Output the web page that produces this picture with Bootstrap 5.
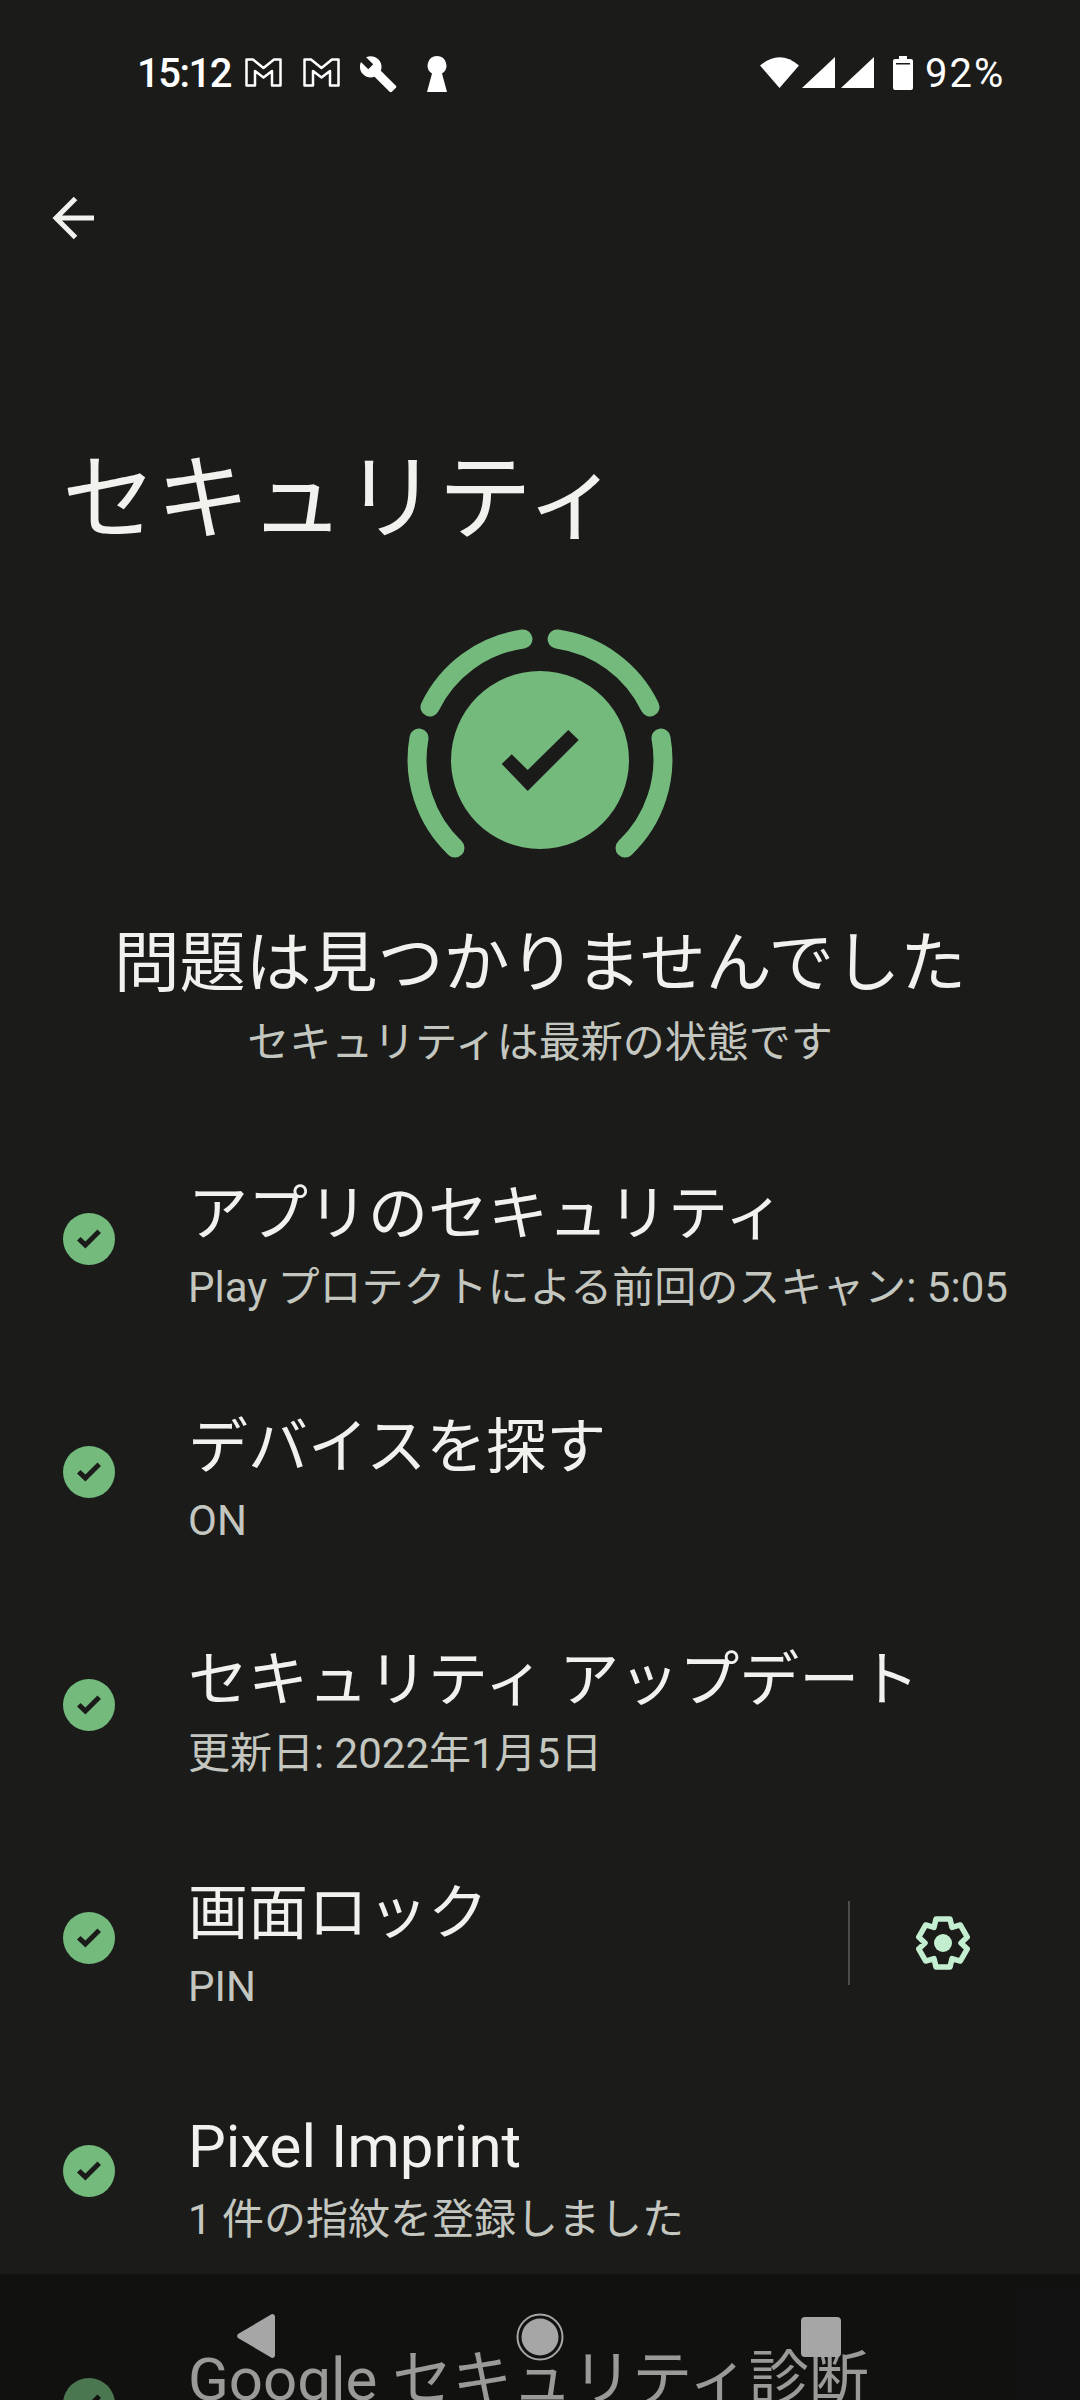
<!DOCTYPE html>
<html lang="ja">
<head>
    <meta charset="UTF-8">
    <meta name="viewport" content="width=device-width, initial-scale=1.0">
    <title>セキュリティ</title>
    <link href="https://cdn.jsdelivr.net/npm/bootstrap@5.3.3/dist/css/bootstrap.min.css" rel="stylesheet">
    <style>
        html, body { height: 2400px; overflow: hidden; }
        body { background: #1b1c1a; color: #f1f2ed; font-family: Roboto, "Noto Sans CJK JP", sans-serif; }
        .phone { height: 2400px; overflow: hidden; position: relative; }

        .statusbar { height: 146px; padding: 56px 75px 0 137px; align-items: flex-start; color: #fff; font-size: 40px; line-height: 36px; }
        .statusbar svg { display: block; fill: #fff; }
        .clock { width: 90px; letter-spacing: -1.500px; white-space: nowrap; font-weight: 500; }
        .percent { width: 80px; letter-spacing: 2px; white-space: nowrap; margin-left: 12px; }
        .back-row { height: 144px; padding: 50px 0 0 52px; }

        .page-title { font-size: 94px; font-weight: 400; line-height: 120px; margin: 150px 0 0 62px; }

        .shield { margin-top: 60px; }
        .shield svg { display: block; margin: 0 auto; }
        .summary-title { font-size: 66px; line-height: 90px; margin-top: 59px; font-weight: 400; }
        .summary-sub { font-size: 42px; line-height: 60px; margin-top: 4px; color: #c4c7c0; font-weight: 400; }

        .item-list { margin-top: 55px; }
        .sec-item { height: 233px; padding: 45px 0 0 63px; }
        .sec-check { width: 52px; height: 52px; margin-top: 40px; flex-shrink: 0; }
        .sec-text { margin-left: 73px; }
        .sec-title { font-size: 60px; line-height: 84px; font-weight: 400; white-space: nowrap; }
        .sec-sub { font-size: 42px; line-height: 56px; margin-top: 3px; color: #c4c7c0; font-weight: 400; white-space: nowrap; }
        .sec-side { width: 2px; height: 84px; background: #4d4e4c; margin: 29px 66px 0 0; }
        .sec-gear { margin: 44px 110px 0 0; }

        .nav-overlay { position: absolute; left: 0; right: 0; bottom: 0; height: 126px; background: rgba(0, 0, 0, .36); }
        .nav-overlay svg { position: absolute; fill: #a6a6a6; }
    </style>
</head>
<body>
    <div class="phone">
        <!-- status bar -->
        <div class="statusbar d-flex justify-content-between">
            <div class="d-flex align-items-start">
                <span class="clock">15:12</span>
                <svg width="37" height="29" viewBox="0 0 37 29" style="margin:2px 0 0 18px"><path d="M1.5 1.5H8L18.5 10 29 1.5h6.5v26H27V13l-8.5 6.500L10 13v14.500H1.500z" fill="none" stroke="#fff" stroke-width="2.500" stroke-linejoin="round"/></svg>
                <svg width="37" height="29" viewBox="0 0 37 29" style="margin:2px 0 0 21px"><path d="M1.5 1.5H8L18.5 10 29 1.5h6.5v26H27V13l-8.5 6.500L10 13v14.500H1.500z" fill="none" stroke="#fff" stroke-width="2.500" stroke-linejoin="round"/></svg>
                <svg width="38" height="38" viewBox="1 1 23 23" style="margin-left:20px"><path d="M22.7 19l-9.100-9.100c.9-2.300.4-5-1.500-6.900-2-2-5-2.400-7.400-1.300L9 6 6 9 1.600 4.700C.4 7.100.9 10.100 2.900 12.100c1.900 1.900 4.600 2.400 6.900 1.500l9.100 9.100c.4.4 1 .4 1.400 0l2.300-2.300c.5-.4.5-1.100.1-1.400z"/></svg>
                <svg width="20" height="36" viewBox="0 0 20 36" style="margin-left:29px"><path d="M10 0a9.500 9.500 0 0 1 5 17.500L20 36H0L5 17.500A9.500 9.500 0 0 1 10 0z"/></svg>
            </div>
            <div class="d-flex align-items-start">
                <svg width="39" height="31" viewBox="0 0 39 31" style="margin-top:1px"><path d="M0 8.500Q19.500-8 39 8.500L19.500 31z"/></svg>
                <svg width="33" height="31" viewBox="0 0 33 31" style="margin:1px 0 0 3px"><path d="M0 31L33 0v31z"/></svg>
                <svg width="33" height="31" viewBox="0 0 33 31" style="margin:1px 0 0 6px"><path d="M0 31L33 0v31z"/></svg>
                <svg width="20" height="34" viewBox="0 0 20 34" style="margin-left:19px"><path d="M6 0h8v3h4a2 2 0 0 1 2 2v27a2 2 0 0 1-2 2H2a2 2 0 0 1-2-2V5a2 2 0 0 1 2-2h4z"/><rect x="3" y="7" width="14" height="1.500" fill="#1b1c1a"/></svg>
                <span class="percent">92%</span>
            </div>
        </div>

        <!-- back arrow -->
        <div class="back-row">
            <svg width="44" height="44" viewBox="0 0 44 44" class="d-block"><path d="M3 22H42M23.500 2.500L4 22l19.500 19.500" fill="none" stroke="#f1f2ed" stroke-width="5"/></svg>
        </div>

        <h1 class="page-title">セキュリティ</h1>

        <!-- status summary -->
        <div class="shield">
            <svg width="280" height="240" viewBox="400 620 280 240">
                <g fill="none" stroke="#74ba7d" stroke-width="19" stroke-linecap="round">
                    <path d="M523 639A122 122 0 0 0 430 707"/>
                    <path d="M557 639A122 122 0 0 1 650 707"/>
                    <path d="M419 738A122 122 0 0 0 455 848"/>
                    <path d="M661 738A122 122 0 0 1 625 848"/>
                </g>
                <circle cx="540" cy="760" r="89" fill="#74ba7d"/>
                <polygon points="501.700,764 511.700,754.300 527.700,770 568.300,730 578.700,740 527.700,791" fill="#1b1c1a"/>
            </svg>
        </div>
        <div class="summary-title text-center">問題は見つかりませんでした</div>
        <div class="summary-sub text-center">セキュリティは最新の状態です</div>

        <!-- items -->
        <div class="item-list">
            <div class="sec-item d-flex">
                <svg class="sec-check" viewBox="-26 -26 52 52"><circle r="26" fill="#74ba7d"/><polygon points="-12,1.500 -8.500,-2 -3.600,2.500 8.500,-9.500 12,-6 -3.600,9.500" fill="#1b1c1a"/></svg>
                <div class="sec-text">
                    <div class="sec-title">アプリのセキュリティ</div>
                    <div class="sec-sub">Play プロテクトによる前回のスキャン: 5:05</div>
                </div>
            </div>
            <div class="sec-item d-flex">
                <svg class="sec-check" viewBox="-26 -26 52 52"><circle r="26" fill="#74ba7d"/><polygon points="-12,1.500 -8.500,-2 -3.600,2.500 8.500,-9.500 12,-6 -3.600,9.500" fill="#1b1c1a"/></svg>
                <div class="sec-text">
                    <div class="sec-title">デバイスを探す</div>
                    <div class="sec-sub">ON</div>
                </div>
            </div>
            <div class="sec-item d-flex">
                <svg class="sec-check" viewBox="-26 -26 52 52"><circle r="26" fill="#74ba7d"/><polygon points="-12,1.500 -8.500,-2 -3.600,2.500 8.500,-9.500 12,-6 -3.600,9.500" fill="#1b1c1a"/></svg>
                <div class="sec-text">
                    <div class="sec-title">セキュリティ アップデート</div>
                    <div class="sec-sub">更新日: 2022年1月5日</div>
                </div>
            </div>
            <div class="sec-item d-flex">
                <svg class="sec-check" viewBox="-26 -26 52 52"><circle r="26" fill="#74ba7d"/><polygon points="-12,1.500 -8.500,-2 -3.600,2.500 8.500,-9.500 12,-6 -3.600,9.500" fill="#1b1c1a"/></svg>
                <div class="sec-text flex-grow-1">
                    <div class="sec-title">画面ロック</div>
                    <div class="sec-sub">PIN</div>
                </div>
                <div class="sec-side"></div>
                <svg class="sec-gear" width="54" height="54" viewBox="-27 -27 54 54">
                    <polygon points="-7,-24 7,-24 9,-15.600 17.270,-18.070 24.290,-5.920 18,0 24.290,5.920 17.270,18.070 9,15.600 7,24 -7,24 -9,15.600 -17.270,18.070 -24.290,5.920 -18,0 -24.290,-5.920 -17.270,-18.070 -9,-15.600" fill="none" stroke="#c4eed0" stroke-width="5.500" stroke-linejoin="round"/>
                    <circle r="9" fill="#c4eed0"/>
                </svg>
            </div>
            <div class="sec-item d-flex">
                <svg class="sec-check" viewBox="-26 -26 52 52"><circle r="26" fill="#74ba7d"/><polygon points="-12,1.500 -8.500,-2 -3.600,2.500 8.500,-9.500 12,-6 -3.600,9.500" fill="#1b1c1a"/></svg>
                <div class="sec-text">
                    <div class="sec-title">Pixel Imprint</div>
                    <div class="sec-sub">1 件の指紋を登録しました</div>
                </div>
            </div>
            <div class="sec-item d-flex">
                <svg class="sec-check" viewBox="-26 -26 52 52"><circle r="26" fill="#74ba7d"/><polygon points="-12,1.500 -8.500,-2 -3.600,2.500 8.500,-9.500 12,-6 -3.600,9.500" fill="#1b1c1a"/></svg>
                <div class="sec-text">
                    <div class="sec-title">Google セキュリティ診断</div>
                </div>
            </div>
        </div>

        <!-- navigation bar, over the list -->
        <div class="nav-overlay">
            <svg width="38" height="44" viewBox="0 0 38 44" style="left:237px;top:40px"><path d="M35 0a3 3 0 0 1 3 3v38a3 3 0 0 1-3 3L1 24a3 3 0 0 1 0-4z"/></svg>
            <svg width="48" height="48" viewBox="0 0 48 48" style="left:516px;top:39px"><circle cx="24" cy="24" r="18.500"/><circle cx="24" cy="24" r="22.500" fill="none" stroke="#a6a6a6" stroke-width="2"/></svg>
            <svg width="40" height="40" viewBox="0 0 40 40" style="left:801px;top:43px"><rect width="40" height="40" rx="4"/></svg>
        </div>
    </div>
    <script src="https://cdn.jsdelivr.net/npm/bootstrap@5.3.3/dist/js/bootstrap.bundle.min.js"></script>
</body>
</html>
